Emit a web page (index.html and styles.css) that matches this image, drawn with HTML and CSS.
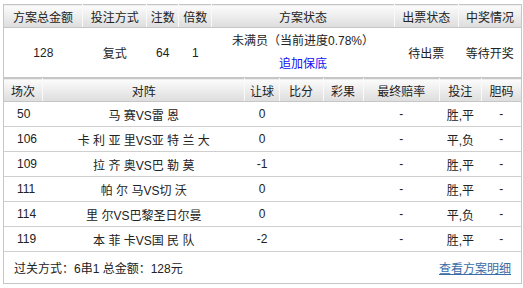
FILE: index.html
```html
<!DOCTYPE html>
<html lang="zh-CN">
<head>
<meta charset="utf-8">
<title>方案详情</title>
<link rel="stylesheet" href="styles.css">
</head>
<body>
<div class="wrap">
  <table class="t1">
    <colgroup>
      <col class="c79"><col class="c64"><col class="c32"><col class="c33"><col class="c182"><col class="c64"><col class="c63">
    </colgroup>
    <thead>
      <tr><th>方案总金额</th><th>投注方式</th><th>注数</th><th>倍数</th><th>方案状态</th><th>出票状态</th><th>中奖情况</th></tr>
    </thead>
    <tbody>
      <tr class="main">
        <td>128</td><td>复式</td><td>64</td><td>1</td>
        <td class="status">未满员（当前进度0.78%）<br><a class="add" href="#">追加保底</a></td>
        <td>待出票</td><td>等待开奖</td>
      </tr>
    </tbody>
  </table>
  <table class="t2">
    <colgroup>
      <col class="c39"><col class="c202"><col class="c34"><col class="c44"><col class="c40"><col class="c76"><col class="c42"><col class="c40">
    </colgroup>
    <thead>
      <tr><th>场次</th><th>对阵</th><th>让球</th><th>比分</th><th>彩果</th><th>最终赔率</th><th>投注</th><th>胆码</th></tr>
    </thead>
    <tbody>
      <tr><td class="no">50</td><td>马 赛VS雷 恩</td><td>0</td><td></td><td></td><td>-</td><td>胜,平</td><td>-</td></tr>
      <tr><td class="no">106</td><td>卡 利 亚 里VS亚 特 兰 大</td><td>0</td><td></td><td></td><td>-</td><td>平,负</td><td>-</td></tr>
      <tr><td class="no">109</td><td>拉 齐 奥VS巴 勒 莫</td><td>-1</td><td></td><td></td><td>-</td><td>胜,平</td><td>-</td></tr>
      <tr><td class="no">111</td><td>帕 尔 马VS切 沃</td><td>0</td><td></td><td></td><td>-</td><td>胜,平</td><td>-</td></tr>
      <tr><td class="no">114</td><td>里 尔VS巴黎圣日尔曼</td><td>0</td><td></td><td></td><td>-</td><td>平,负</td><td>-</td></tr>
      <tr><td class="no">119</td><td>本 菲 卡VS国 民 队</td><td>-2</td><td></td><td></td><td>-</td><td>胜,平</td><td>-</td></tr>
      <tr class="foot">
        <td colspan="8">
          <div class="foot-in">
            <span>过关方式：6串1 总金额：128元</span>
            <a class="detail" href="#">查看方案明细</a>
          </div>
        </td>
      </tr>
    </tbody>
  </table>
</div>
</body>
</html>
```
FILE: styles.css
```css
body {
  margin: 0;
  background: #fff;
  font-family: "Liberation Sans", "Noto Sans CJK SC", sans-serif;
  font-size: 12px;
  color: #222;
}
.wrap {
  padding: 4px 0 0 3px;
}
table {
  border-collapse: collapse;
  table-layout: fixed;
  width: 519px;
  border: 1px solid #c6c6c6;
}
.c79 { width: 79px; }
.c64 { width: 64px; }
.c32 { width: 32px; }
.c33 { width: 33px; }
.c182 { width: 182px; }
.c63 { width: 63px; }
.c39 { width: 39px; }
.c202 { width: 202px; }
.c34 { width: 34px; }
.c44 { width: 44px; }
.c40 { width: 40px; }
.c76 { width: 76px; }
.c42 { width: 42px; }
th {
  height: 22px;
  padding: 0;
  font-weight: normal;
  text-align: center;
  color: #222;
  background: linear-gradient(#fcfcfc, #dddddd);
  border-bottom: 1px solid #c6c6c6;
}
th + th {
  border-left: 1px solid #fafafa;
}
td {
  padding: 0;
  text-align: center;
}
.main td {
  height: 49px;
}
.status {
  line-height: 23px;
}
.add {
  color: #1010f0;
  text-decoration: none;
}
.t2 td {
  height: 24px;
  border-bottom: 1px solid #cfcfcf;
}
.t2 td.no {
  text-align: left;
  padding-left: 13px;
}
.t2 .foot td {
  height: 31px;
  border-bottom: 1px solid #c6c6c6;
}
.foot-in {
  display: flex;
  justify-content: space-between;
  align-items: center;
  padding: 0 10px 0 10px;
}
.detail {
  color: #3a6ca8;
  text-decoration: underline;
}
```
